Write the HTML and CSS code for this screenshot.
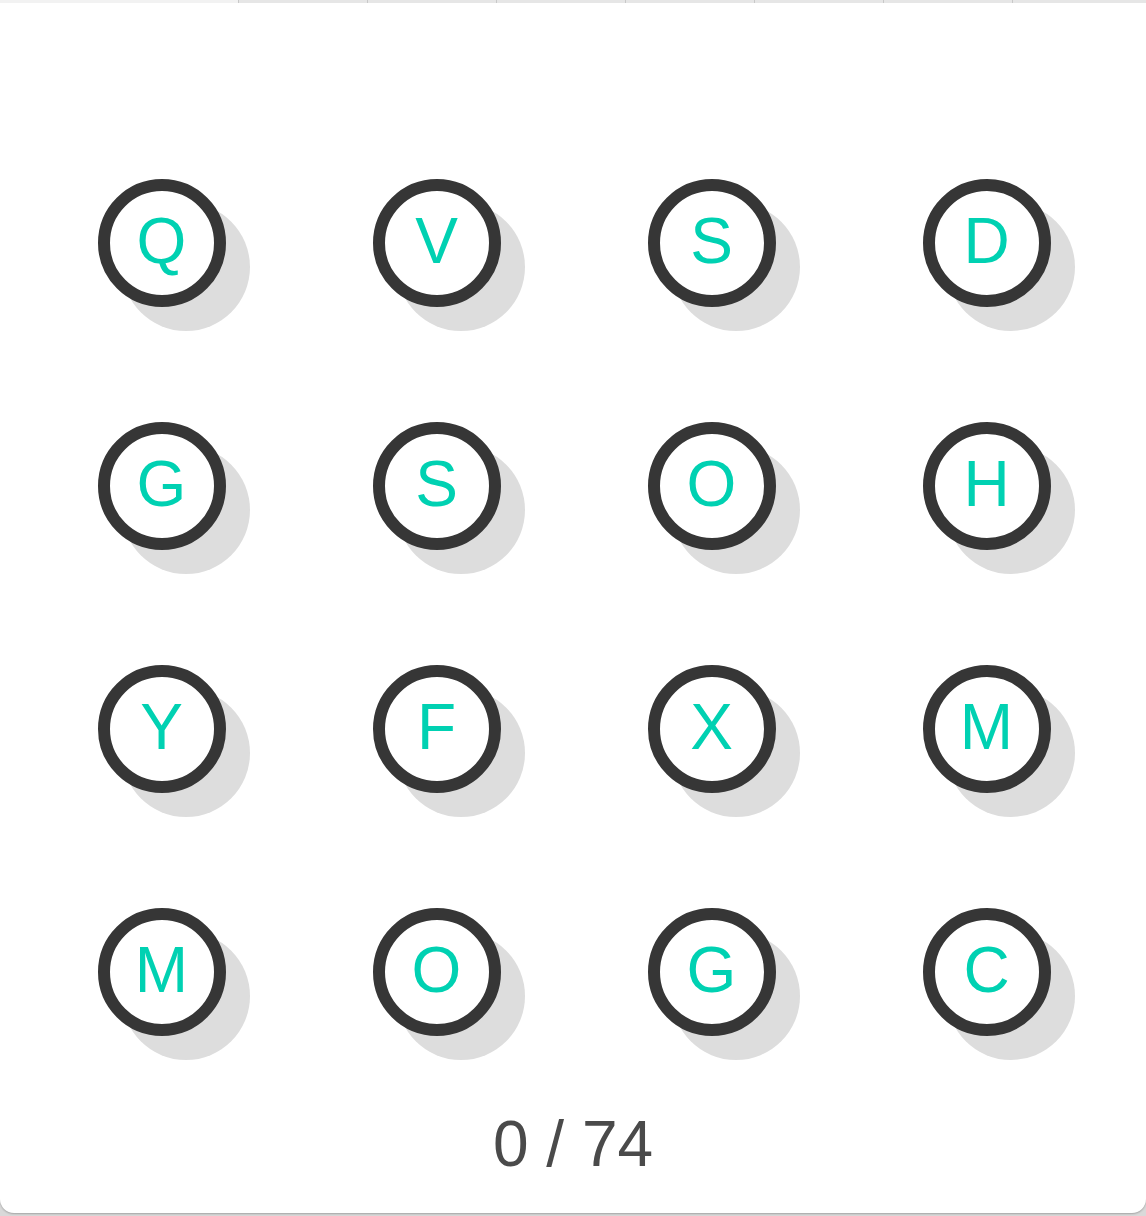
FILE: index.html
```html
<!DOCTYPE html>
<html>
<head>
<meta charset="utf-8">
<link rel="stylesheet" href="styles.css">
</head>
<body>
<div class="topbar">
  <div class="tab tab-first"></div>
  <div class="tab"></div>
  <div class="tab"></div>
  <div class="tab"></div>
  <div class="tab"></div>
  <div class="tab"></div>
  <div class="tab"></div>
  <div class="tab tab-last"></div>
</div>
<main class="card">
  <div class="board">
    <div class="cell"><div class="key">Q</div></div>
    <div class="cell"><div class="key">V</div></div>
    <div class="cell"><div class="key">S</div></div>
    <div class="cell"><div class="key">D</div></div>
    <div class="cell"><div class="key">G</div></div>
    <div class="cell"><div class="key">S</div></div>
    <div class="cell"><div class="key">O</div></div>
    <div class="cell"><div class="key">H</div></div>
    <div class="cell"><div class="key">Y</div></div>
    <div class="cell"><div class="key">F</div></div>
    <div class="cell"><div class="key">X</div></div>
    <div class="cell"><div class="key">M</div></div>
    <div class="cell"><div class="key">M</div></div>
    <div class="cell"><div class="key">O</div></div>
    <div class="cell"><div class="key">G</div></div>
    <div class="cell"><div class="key">C</div></div>
  </div>
  <div class="counter">0 / 74</div>
</main>
</body>
</html>
```

FILE: styles.css
```css
html, body {
  margin: 0;
  padding: 0;
}
body {
  background: #d9d9d9;
  font-family: "Liberation Sans", Arial, sans-serif;
  width: 1146px;
  height: 1216px;
  overflow: hidden;
}
.topbar {
  display: flex;
  height: 3px;
  background: #e4e4e4;
}
.tab {
  flex: 0 0 129px;
  border-right: 1px solid #c8c8c8;
  box-sizing: border-box;
  background: #e6e6e6;
}
.tab-first {
  flex: 0 0 239px;
  background: #f2f2f2;
}
.tab-last {
  flex: 1 1 auto;
  border-right: none;
}
.card {
  background: #ffffff;
  height: 1210px;
  box-sizing: border-box;
  border-radius: 0 0 14px 14px;
  padding: 118px 22px 0 24px;
  box-shadow: 0 1px 2px rgba(0,0,0,0.25);
}
.board {
  display: grid;
  grid-template-columns: repeat(4, 275px);
  grid-auto-rows: 243px;
}
.cell {
  display: flex;
  align-items: center;
  justify-content: center;
}
.key {
  width: 128px;
  height: 128px;
  box-sizing: border-box;
  border: 12px solid #363636;
  border-radius: 50%;
  background: #ffffff;
  box-shadow: 24px 24px 0 #dddddd;
  display: flex;
  align-items: center;
  justify-content: center;
  color: #00d1b2;
  font-size: 64px;
  line-height: 1;
  padding-bottom: 4px;
}
.counter {
  margin-top: 14px;
  text-align: center;
  color: #4a4a4a;
  font-size: 64px;
  margin-left: -24px;
  margin-right: -22px;
}
```
